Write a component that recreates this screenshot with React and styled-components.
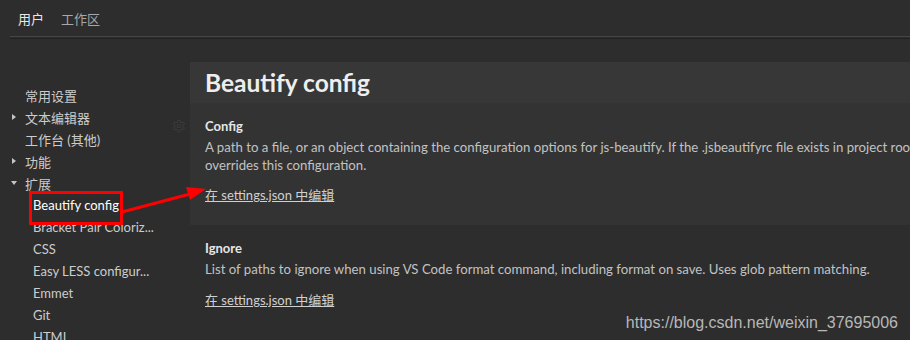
import React from "react";
import styled, { createGlobalStyle } from "styled-components";

const Global = createGlobalStyle`
  html, body { margin: 0; padding: 0; background: #2d2d2d; }
  body { font-family: "Lato", "Noto Sans CJK SC", sans-serif; }
`;

const Page = styled.div`
  position: relative;
  width: 910px;
  height: 340px;
  overflow: hidden;
  background: #2d2d2d;
  color: #cccccc;
`;

const Header = styled.div`
  display: flex;
  align-items: center;
  gap: 17px;
  height: 36px;
  padding-left: 18px;
  font-family: "Noto Sans CJK SC", sans-serif;
  font-size: 13px;
`;

const Tab = styled.span`
  color: ${(p) => (p.$active ? "#e8e8e8" : "#a8a8a8")};
`;

const Separator = styled.div`
  margin-left: 10px;
  height: 1px;
  border-top: 1px solid #454545;
  border-bottom: 1px solid #222222;
`;

const Body = styled.div`
  display: flex;
`;

const Sidebar = styled.div`
  width: 190px;
  flex: none;
  padding-top: 45px;
`;

const TreeRow = styled.div`
  display: flex;
  align-items: center;
  height: 22px;
  padding-left: ${(p) => (p.$child ? 33 : 11)}px;
  font-size: 13px;
  font-family: "Lato", "Noto Sans CJK SC", sans-serif;
  color: ${(p) => (p.$selected ? "#ffffff" : "#cccccc")};
  white-space: nowrap;
`;

const Twistie = styled.span`
  width: 14px;
  flex: none;
  display: flex;
  align-items: center;
`;

const Arrow = ({ open }) => (
  <svg width="6" height="6" viewBox="0 0 6 6">
    {open ? (
      <polygon points="0,1 6,1 3,5" fill="#c5c5c5" />
    ) : (
      <polygon points="1,0 5,3 1,6" fill="#c5c5c5" />
    )}
  </svg>
);

const Panel = styled.div`
  flex: 1;
  margin-top: 23px;
`;

const PanelHeader = styled.div`
  height: 41px;
  display: flex;
  align-items: center;
  padding-left: 15px;
  background: #373737;
`;

const Title = styled.h1`
  margin: 0;
  font-family: "Lato", sans-serif;
  font-weight: 700;
  font-size: 24.5px;
  color: #eeeeee;
  white-space: nowrap;
`;

const Setting = styled.div`
  position: relative;
  padding: ${(p) => (p.$focused ? "12px 15px 21px" : "10px 15px 20px")};
  background: ${(p) => (p.$focused ? "#333333" : "transparent")};
  margin-bottom: 2px;
`;

const Label = styled.div`
  font-family: "Lato", sans-serif;
  font-weight: 700;
  font-size: 13px;
  line-height: 22px;
  color: #e6e6e6;
`;

const Description = styled.div`
  margin-top: 1px;
  font-family: "Lato", sans-serif;
  font-size: 13.2px;
  line-height: 18px;
  color: #c2c2c2;
  white-space: nowrap;
`;

const EditLink = styled.a`
  display: inline-block;
  margin-top: ${(p) => p.$gap}px;
  font-family: "Lato", "Noto Sans CJK SC", sans-serif;
  font-size: 13px;
  line-height: 18px;
  color: #d0d0d0;
  text-decoration: underline;
`;

const Gear = styled.svg`
  position: absolute;
  left: -18px;
  top: 16px;
`;

const Watermark = styled.div`
  position: absolute;
  right: 12px;
  bottom: 8px;
  font-family: "Liberation Sans", sans-serif;
  font-size: 16px;
  color: #b8b8b8;
`;

const Annotation = styled.svg`
  position: absolute;
  left: 0;
  top: 0;
  pointer-events: none;
`;

const tree = [
  { label: "常用设置" },
  { label: "文本编辑器", twist: "closed" },
  { label: "工作台 (其他)" },
  { label: "功能", twist: "closed" },
  { label: "扩展", twist: "open" },
  { label: "Beautify config", child: true, selected: true },
  { label: "Bracket Pair Coloriz...", child: true },
  { label: "CSS", child: true },
  { label: "Easy LESS configur...", child: true },
  { label: "Emmet", child: true },
  { label: "Git", child: true },
  { label: "HTML", child: true },
];

export default function App() {
  return (
    <Page>
      <Global />
      <Header>
        <Tab $active>用户</Tab>
        <Tab>工作区</Tab>
      </Header>
      <Separator />
      <Body>
        <Sidebar>
          {tree.map((t) => (
            <TreeRow key={t.label} $child={t.child} $selected={t.selected}>
              {!t.child && (
                <Twistie>{t.twist && <Arrow open={t.twist === "open"} />}</Twistie>
              )}
              {t.label}
            </TreeRow>
          ))}
        </Sidebar>
        <Panel>
          <PanelHeader>
            <Title>Beautify config</Title>
          </PanelHeader>
          <Setting $focused>
            <Gear width="14" height="14" viewBox="0 0 24 24" fill="none" stroke="#3a3a3a" strokeWidth="2">
              <circle cx="12" cy="12" r="3" />
              <path d="M12.22 2h-.44a2 2 0 0 0-2 2v.18a2 2 0 0 1-1 1.73l-.43.25a2 2 0 0 1-2 0l-.15-.08a2 2 0 0 0-2.73.73l-.22.38a2 2 0 0 0 .73 2.73l.15.1a2 2 0 0 1 1 1.72v.51a2 2 0 0 1-1 1.74l-.15.09a2 2 0 0 0-.73 2.730l.22.38a2 2 0 0 0 2.73.73l.15-.08a2 2 0 0 1 2 0l.43.25a2 2 0 0 1 1 1.73V20a2 2 0 0 0 2 2h.44a2 2 0 0 0 2-2v-.18a2 2 0 0 1 1-1.73l.43-.25a2 2 0 0 1 2 0l.15.08a2 2 0 0 0 2.73-.73l.22-.39a2 2 0 0 0-.73-2.73l-.15-.08a2 2 0 0 1-1-1.74v-.5a2 2 0 0 1 1-1.74l.15-.09a2 2 0 0 0 .73-2.73l-.22-.38a2 2 0 0 0-2.73-.73l-.15.08a2 2 0 0 1-2 0l-.43-.25a2 2 0 0 1-1-1.73V4a2 2 0 0 0-2-2z" />
            </Gear>
            <Label>Config</Label>
            <Description>
              A path to a file, or an object containing the configuration options for js-beautify. If the .jsbeautifyrc file exists in project root, it
              <br />
              overrides this configuration.
            </Description>
            <EditLink $gap={12}>在 settings.json 中编辑</EditLink>
          </Setting>
          <Setting>
            <Label>Ignore</Label>
            <Description>
              List of paths to ignore when using VS Code format command, including format on save. Uses glob pattern matching.
            </Description>
            <EditLink $gap={13}>在 settings.json 中编辑</EditLink>
          </Setting>
        </Panel>
      </Body>
      <Annotation width="910" height="340" viewBox="0 0 910 340">
        <rect x="30.5" y="192.5" width="91" height="31" fill="none" stroke="#ff0000" strokeWidth="3" />
        <line x1="122" y1="212" x2="190" y2="194" stroke="#ff0000" strokeWidth="3" />
        <polygon points="206,189 186,187 190,200" fill="#ff0000" />
      </Annotation>
      <Watermark>https://blog.csdn.net/weixin_37695006</Watermark>
    </Page>
  );
}
